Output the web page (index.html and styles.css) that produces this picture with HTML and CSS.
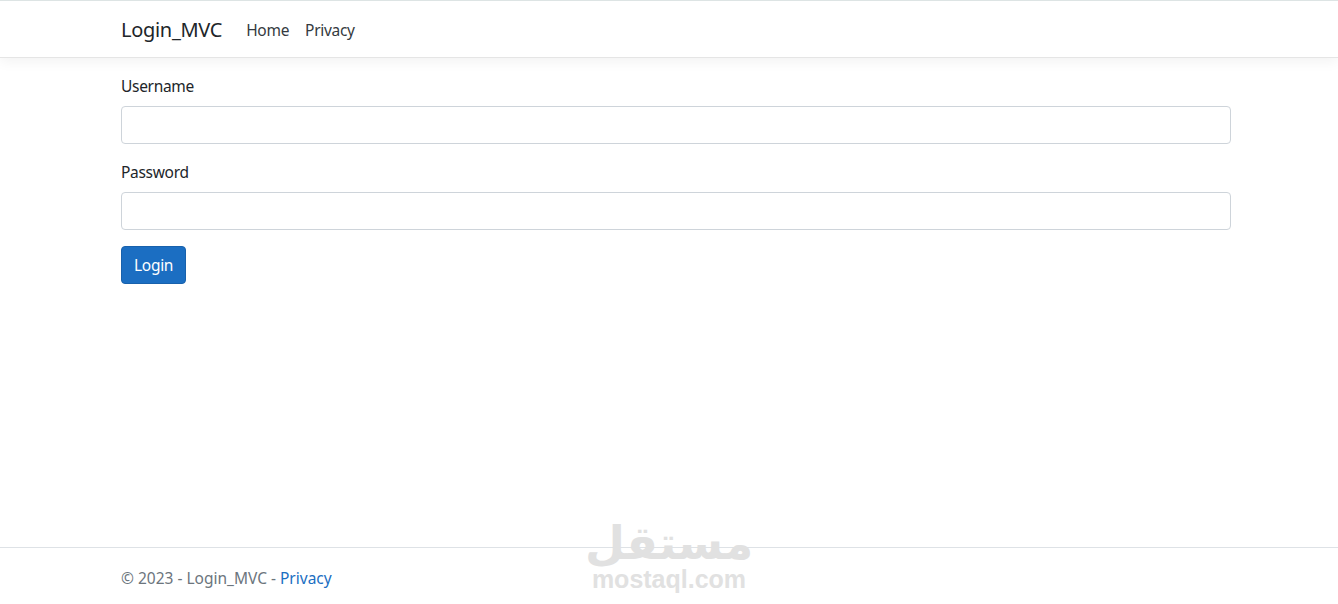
FILE: index.html
```html
<!DOCTYPE html>
<html lang="en">
  <head>
    <meta charset="UTF-8" />
    <meta name="viewport" content="width=device-width, initial-scale=1.0" />
    <title>Login - Login_MVC</title>
    <link rel="stylesheet" href="styles.css">
  </head>
  <body>
    <header>
      <nav class="navbar">
        <div class="container nav-inner">
          <a class="brand" href="#">Login_MVC</a>
          <ul class="nav-links">
            <li><a href="#">Home</a></li>
            <li><a href="#">Privacy</a></li>
          </ul>
        </div>
      </nav>
    </header>

    <main class="container">
      <form class="login-form">
        <div class="form-group">
          <label for="username">Username</label>
          <input type="text" id="username" class="form-control" />
        </div>
        <div class="form-group">
          <label for="password">Password</label>
          <input type="password" id="password" class="form-control" />
        </div>
        <button type="submit" class="btn-primary">Login</button>
      </form>
    </main>

    <footer class="footer">
      <div class="container">
        &copy; 2023 - Login_MVC - <a href="#">Privacy</a>
      </div>
    </footer>

    <!-- watermark from the original screenshot -->
    <div class="watermark">
      <span class="wm-ar" lang="ar" dir="rtl">مستقل</span>
      <span class="wm-en">mostaql.com</span>
    </div>
  </body>
</html>
```

FILE: styles.css
```css
html {
  font-size: 16px;
}

body {
  font-family: "Noto Sans", "Open Sans", sans-serif;
  font-size: 15.5px;
  letter-spacing: -0.3px;
  line-height: 24px;
  color: #212529;
  background: #fff;
  margin: 0;
  min-height: 100vh;
  display: flex;
  flex-direction: column;
  position: relative;
  overflow: hidden;
}

a {
  text-decoration: none;
}

.container {
  width: 1110px;
  margin-left: calc((100% - 1110px) / 2 + 7px);
}

.navbar {
  border-top: 1px solid #dde4e4;
  border-bottom: 1px solid #e5e5e5;
  box-shadow: 0 4px 12px rgba(0, 0, 0, 0.05);
  background: #fff;
  padding: 8px 0;
  margin-bottom: 16px;
}

.nav-inner {
  display: flex;
  align-items: center;
  height: 39px;
  padding-top: 1px;
}

.brand {
  font-size: 20px;
  color: #212529;
  margin-right: 16px;
}

.nav-links {
  list-style: none;
  display: flex;
  margin: 0;
  padding: 0;
}

.nav-links a {
  display: block;
  padding: 8px;
  color: #343a40;
}

main {
  flex: 1;
}

.form-group {
  margin-bottom: 16px;
}

label {
  display: inline-block;
  margin-bottom: 8px;
}

.form-control {
  display: block;
  box-sizing: border-box;
  width: 100%;
  height: 38px;
  padding: 6px 12px;
  font: inherit;
  border: 1px solid #ced4da;
  border-radius: 4px;
}

.btn-primary {
  font: inherit;
  letter-spacing: inherit;
  color: #fff;
  background-color: #1b6ec2;
  border: 1px solid #1861ac;
  border-radius: 4px;
  padding: 6px 12px;
  height: 38px;
  cursor: pointer;
}

.footer {
  border-top: 1px solid #dee2e6;
  color: #6c757d;
  height: 57px;
  padding-top: 18px;
  box-sizing: border-box;
  letter-spacing: 0;
}

.footer a {
  color: #1b6ec2;
}

.watermark {
  position: absolute;
  left: 0;
  right: 0;
  bottom: 13px;
  display: flex;
  flex-direction: column;
  align-items: center;
  gap: 2px;
  color: #e1e1e1;
  pointer-events: none;
  font-weight: bold;
  letter-spacing: 0;
}

.wm-ar {
  font-family: "DejaVu Sans", sans-serif;
  font-size: 46px;
  line-height: 44px;
}

.wm-en {
  font-family: "Liberation Sans", Arial, sans-serif;
  font-size: 25px;
  line-height: 24px;
}
```
